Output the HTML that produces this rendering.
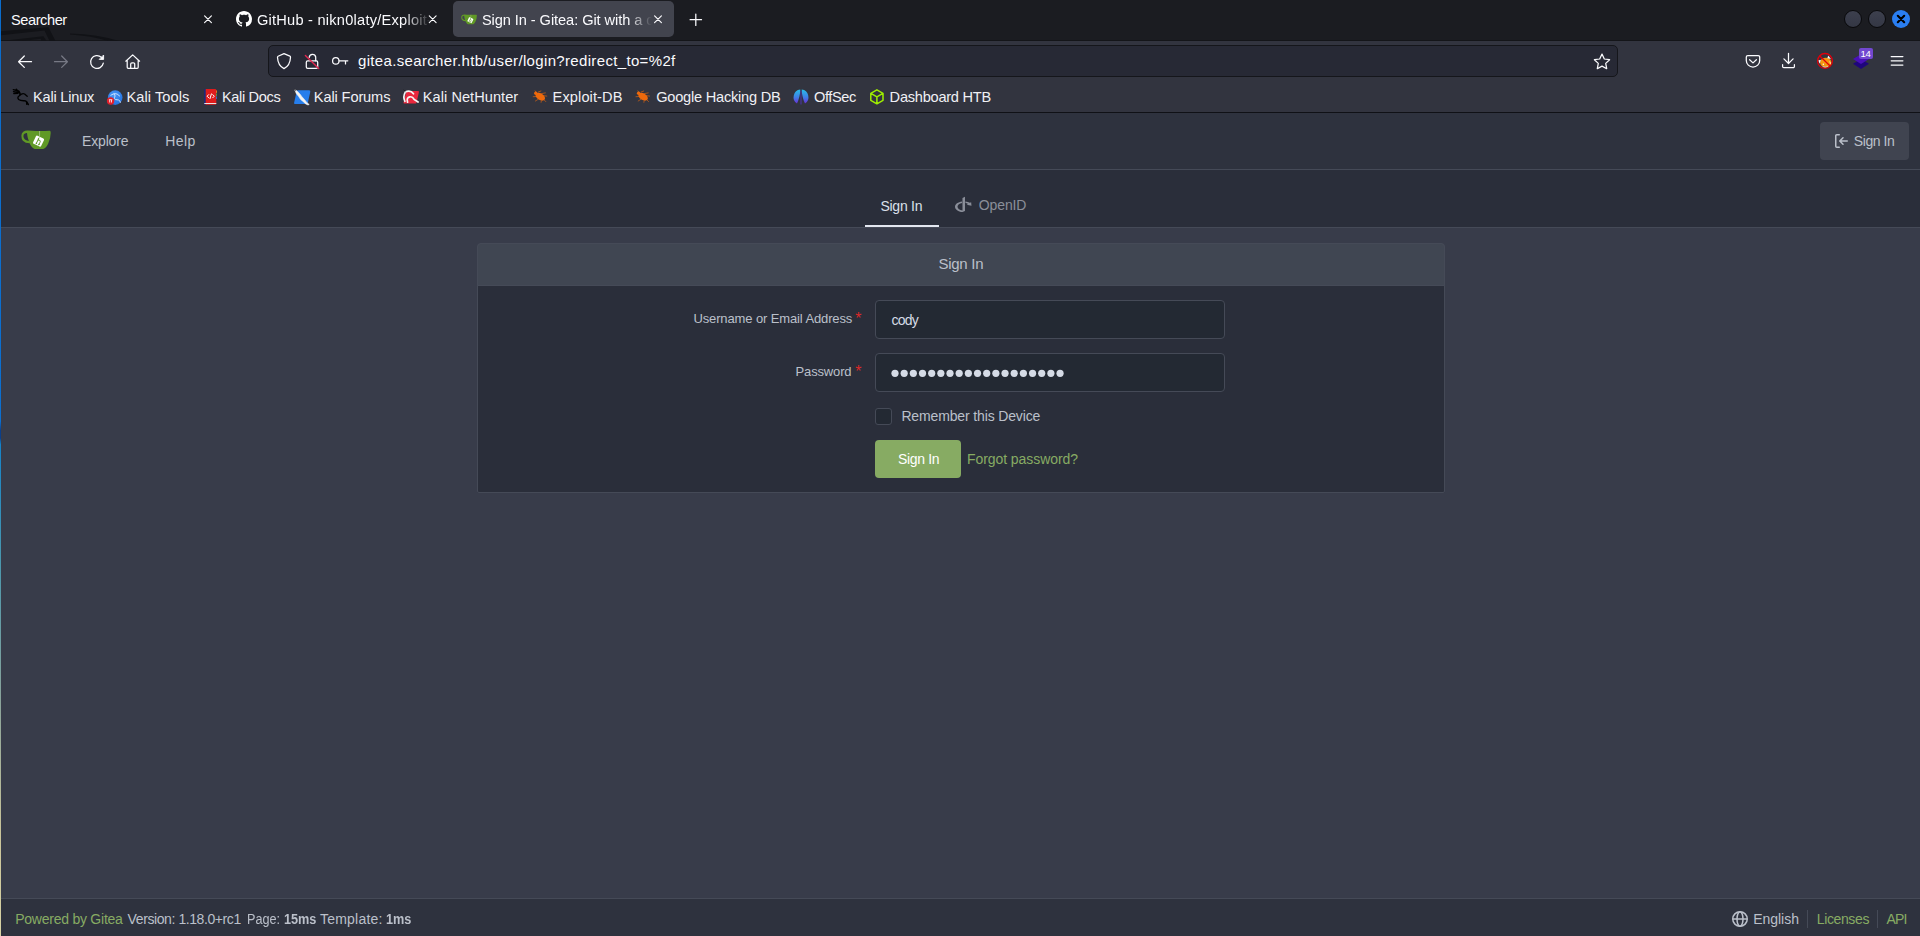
<!DOCTYPE html>
<html lang="en">
<head>
<meta charset="utf-8">
<title>Sign In - Gitea: Git with a cup of tea</title>
<style>
*{box-sizing:border-box;margin:0;padding:0}
html,body{width:1920px;height:936px;overflow:hidden;background:#383c4a}
body{position:relative;font-family:"Liberation Sans","DejaVu Sans",sans-serif;font-size:14px;color:#bbc0ca;-webkit-font-smoothing:antialiased}
.abs{position:absolute}
.t{position:absolute;white-space:nowrap;line-height:20px;height:20px}
svg{position:absolute;overflow:visible}
/* ---------- browser chrome ---------- */
#tabbar{left:0;top:0;width:1920px;height:41px;background:#1b1c21}
#toolbar{left:0;top:41px;width:1920px;height:71px;background:#32343f}
#chromeline{left:0;top:112px;width:1920px;height:1px;background:#101116}
#acttab{left:453px;top:1px;width:221px;height:36px;background:#42444e;border-radius:5px}
#urlbar{left:268px;top:45px;width:1350px;height:32px;background:#272935;border:1px solid #15161b;border-radius:5px}
.ct{color:#fbfbfe;font-size:14.6px}
.bm{color:#f0f0f4;font-size:14.6px}
/* ---------- page ---------- */
#nav{left:0;top:113px;width:1920px;height:57px;background:#2e323e;border-bottom:1px solid #454a57}
#tabs{left:0;top:170px;width:1920px;height:58px;background:#2a2e3a;border-bottom:1px solid #454a57}
#box{left:477px;top:243px;width:968px;height:250px;background:#2a2e3a;border:1px solid #454a57;border-radius:4px 4px 2px 2px}
#boxhead{left:477px;top:243px;width:968px;height:43px;background:#404652;border:1px solid #454a57;border-radius:4px 4px 0 0}
.inp{position:absolute;left:875px;width:350px;height:39px;background:#232933;border:1px solid #454a57;border-radius:4px}
#foot{left:0;top:898px;width:1920px;height:38px;background:#2e323e;border-top:1px solid #454a57}
#edge{left:0;top:0;width:1px;height:936px;background:linear-gradient(#0a6ccc 0,#0c6fd0 45%,#0b3f8a 46%,#0b3f8a 46.800%,#1583c9 47.500%,#4a97ad 60%,#8aa39a 75%,#c9c49a 89%,#d8d3a4 100%)}
</style>
</head>
<body>
<!-- TABBAR -->
<div class="abs" id="tabbar"></div>
<div class="abs" id="toolbar"></div>
<div class="abs" id="chromeline"></div>
<div class="abs" style="left:0;top:40px;width:1920px;height:1px;background:#141519"></div>
<div class="abs" id="acttab"></div>
<div class="abs" id="urlbar"></div>
<!-- PAGE -->
<div class="abs" id="nav"></div>
<div class="abs" id="tabs"></div>
<div class="abs" id="box"></div>
<div class="abs" id="boxhead"></div>
<div class="abs" id="foot"></div>


<!-- PAGE SHAPES -->
<div class="abs" id="navbtn" style="left:1820px;top:122px;width:89px;height:38px;background:#404450;border-radius:4px"></div>
<div class="abs" id="tabline" style="left:865px;top:225px;width:74px;height:2px;background:#e3e7f0"></div>
<div class="inp" id="inp1" style="top:300px"></div>
<div class="inp" id="inp2" style="top:353px"></div>
<div class="abs" id="chk" style="left:875px;top:408px;width:17px;height:17px;background:#232933;border:1px solid #454a57;border-radius:3px"></div>
<div class="abs" id="btn" style="left:875px;top:440px;width:86px;height:38px;background:#87ab63;border-radius:4px"></div>
<svg id="dots" style="left:885px;top:365px" width="190" height="16" viewBox="885 365 190 16"><g fill="#d5dbe6"><circle cx="895.00" cy="373.3" r="3.6"/><circle cx="904.17" cy="373.3" r="3.6"/><circle cx="913.34" cy="373.3" r="3.6"/><circle cx="922.51" cy="373.3" r="3.6"/><circle cx="931.68" cy="373.3" r="3.6"/><circle cx="940.85" cy="373.3" r="3.6"/><circle cx="950.02" cy="373.3" r="3.6"/><circle cx="959.19" cy="373.3" r="3.6"/><circle cx="968.36" cy="373.3" r="3.6"/><circle cx="977.53" cy="373.3" r="3.6"/><circle cx="986.70" cy="373.3" r="3.6"/><circle cx="995.87" cy="373.3" r="3.6"/><circle cx="1005.04" cy="373.3" r="3.6"/><circle cx="1014.21" cy="373.3" r="3.6"/><circle cx="1023.38" cy="373.3" r="3.6"/><circle cx="1032.55" cy="373.3" r="3.6"/><circle cx="1041.72" cy="373.3" r="3.6"/><circle cx="1050.89" cy="373.3" r="3.6"/><circle cx="1060.06" cy="373.3" r="3.6"/></g></svg>
<div class="abs" style="left:1807px;top:910px;width:1px;height:18px;background:#454a57"></div>
<div class="abs" style="left:1877px;top:910px;width:1px;height:18px;background:#454a57"></div>
<!-- PAGE ICONS -->
<svg width="0" height="0" style="left:0;top:0"><defs>
<symbol id="gitea" viewBox="0 0 640 640">
<path fill="#609926" fill-rule="evenodd" d="M150 140 Q240 146 318 150 Q470 154 613 145 Q634 146 634 192 Q634 300 579 423 Q552 482 520 508 Q496 531 472 531 L292 531 Q258 527 214 468 Q196 442 184 413 Q92 412 40 358 Q8 318 8 252 Q8 190 48 164 Q88 136 150 140 Z M128 191 Q76 188 58 224 Q44 258 60 296 Q76 336 126 354 Q148 361 168 363 Q150 312 143 286 Q134 250 128 191 Z"/>
<path d="M396 150 V262" stroke="#a9c48e" stroke-width="17"/>
<rect x="279" y="272" width="190" height="190" rx="26" fill="#fff" transform="rotate(25.700 374 367)"/>
<g transform="rotate(25.700 374 367)" stroke="#609926" stroke-width="17" fill="none" stroke-linecap="round">
<path d="M352 300 V438"/><path d="M352 372 Q356 340 392 338 Q412 340 412 372 V436"/>
</g>
<g transform="rotate(25.700 374 367)" fill="#609926"><circle cx="352" cy="326" r="15"/><circle cx="352" cy="424" r="15"/><circle cx="412" cy="424" r="15"/></g>
</symbol>
</defs></svg>
<svg style="left:21px;top:124px" width="30" height="30"><use href="#gitea"/></svg>
<svg style="left:461px;top:10.500px" width="16" height="16"><use href="#gitea"/></svg>
<svg style="left:954.750px;top:195.200px" width="16.500" height="18.860" viewBox="0 0 448 512"><path fill="#8a8e99" d="M271.500 432l-68 32C88.500 453.700 0 392.500 0 318.200c0-71.500 82.500-131 191.700-144.300v43c-71.500 12.500-124 53-124 101.300 0 51 58.500 93.300 135.700 103v-340l68-33.200v384.200zM448 291l-131.300-28.500 36.800-20.700c-19.500-11.500-43.500-20-70-24.800v-43c46.200 5.500 87.700 19.500 120.300 39.300l35-19.800L448 291z"/></svg>
<svg style="left:1833px;top:133px" width="16" height="16" viewBox="0 0 16 16"><path fill="#bbc0ca" fill-rule="evenodd" d="M2 2.750C2 1.784 2.784 1 3.750 1h2.500a.750.750 0 010 1.500h-2.500a.250.250 0 00-.250.250v10.500c0 .138.112.250.250.250h2.500a.750.750 0 010 1.500h-2.500A1.750 1.750 0 012 13.250V2.750zm6.560 4.500l1.970-1.970a.750.750 0 10-1.060-1.060L6.220 7.470a.750.750 0 000 1.060l3.250 3.250a.750.750 0 101.060-1.060L8.560 8.750h5.690a.750.750 0 000-1.500H8.560z"/></svg>
<svg style="left:1732px;top:911px" width="16" height="16" viewBox="0 0 16 16" fill="none" stroke="#bbc0ca" stroke-width="1.500"><circle cx="8" cy="8" r="7.250"/><ellipse cx="8" cy="8" rx="3" ry="7.250"/><path d="M.750 8h14.500"/></svg>
<!-- CHROME ICONS -->
<svg id="chromesvg" style="left:0;top:0" width="1920" height="113" viewBox="0 0 1920 113" fill="none">
<defs>
<linearGradient id="offg" x1="0" y1="0" x2="0" y2="1"><stop offset="0" stop-color="#27bde8"/><stop offset="0.55" stop-color="#3f7fe6"/><stop offset="1" stop-color="#6a2fd8"/></linearGradient>
<radialGradient id="ktg" cx="0.4" cy="0.3" r="0.8"><stop offset="0" stop-color="#4a97f5"/><stop offset="1" stop-color="#1f6fe0"/></radialGradient>
<linearGradient id="wcg" x1="0" y1="0" x2="0" y2="1"><stop offset="0" stop-color="#3d404e"/><stop offset="1" stop-color="#343744"/></linearGradient>
</defs>
<!-- kali dragon faint bg in tabbar -->
<g fill="#111216"><path d="M1 31.200L48.500 27.200 55.500 41H49.500L44.500 30.600 1 35.200z"/><path d="M1 41L43.500 36.300 46.500 41H41.500L40.800 38.800 22 41z"/><path d="M70 33.600Q98 34.500 119 41H108Q92 36 70 34.600z"/></g>
<!-- tab close buttons -->
<g stroke="#fbfbfe" stroke-width="1.15" stroke-linecap="round">
<path d="M204.6 15.9l6.8 6.8M211.4 15.9l-6.8 6.8"/>
<path d="M429.3 15.9l6.8 6.8M436.1 15.9l-6.8 6.8"/>
<path d="M654.6 15.9l6.8 6.8M661.4 15.9l-6.8 6.8"/>
<path d="M695.8 14v11.400M690.100 19.700h11.400" stroke-width="1.250"/>
</g>
<!-- github favicon -->
<g transform="translate(236 11)"><path fill="#fff" d="M8 0C3.58 0 0 3.58 0 8c0 3.54 2.29 6.53 5.47 7.59.4.07.55-.17.55-.38 0-.19-.01-.82-.01-1.49-2.01.37-2.53-.49-2.69-.94-.09-.23-.48-.94-.82-1.13-.28-.15-.68-.52-.01-.53.63-.01 1.08.58 1.23.82.72 1.21 1.87.87 2.33.66.07-.52.28-.87.51-1.07-1.78-.2-3.64-.89-3.64-3.95 0-.87.31-1.59.82-2.15-.08-.2-.36-1.02.08-2.12 0 0 .67-.21 2.2.82.64-.18 1.32-.27 2-.27.68 0 1.36.09 2 .27 1.53-1.04 2.2-.82 2.2-.82.44 1.1.16 1.92.08 2.12.51.56.82 1.27.82 2.15 0 3.07-1.87 3.75-3.65 3.95.29.25.54.73.54 1.48 0 1.07-.01 1.93-.01 2.2 0 .21.15.46.55.38A8.013 8.013 0 0016 8c0-4.42-3.58-8-8-8z"/></g>
<!-- window controls -->
<circle cx="1853" cy="19" r="8.5" fill="url(#wcg)" stroke="#08080a" stroke-width="1"/>
<circle cx="1877" cy="19" r="8.5" fill="url(#wcg)" stroke="#08080a" stroke-width="1"/>
<circle cx="1901" cy="19" r="9" fill="#2a7ef2"/>
<path d="M1897.8 15.8l6.4 6.4M1904.2 15.8l-6.4 6.4" stroke="#000" stroke-width="2.1" stroke-linecap="round"/>
<!-- nav icons -->
<g stroke="#fbfbfe" stroke-width="1.25" stroke-linecap="round" stroke-linejoin="round">
<path d="M31.5 61.7H18.6M24.3 56l-5.7 5.7 5.7 5.7"/>
<path d="M54.5 61.7h12.9M61.7 56l5.7 5.7-5.7 5.7" stroke="#777985"/>
<path d="M103.3 63.2a6.4 6.4 0 1 1-2-5.9"/>
<path d="M103.6 55.4v4h-4z" fill="#fbfbfe" stroke-width="0.9"/>
<path d="M125.8 61.2l6.9-6.3 6.9 6.3M127.2 60.4v6.9a1 1 0 0 0 1 1h9a1 1 0 0 0 1-1v-6.9M130.7 68.1v-4a1.3 1.3 0 0 1 1.3-1.3h1.4a1.3 1.3 0 0 1 1.3 1.3v4"/>
<!-- shield -->
<path d="M284 53.7l5.9 2.5a1 1 0 0 1 .6 1c-.2 5.300-2.600 9.400-6.500 11.400-3.900-2-6.300-6.100-6.500-11.400a1 1 0 0 1 .6-1z"/>
<!-- lock -->
<path d="M308.300 60.9h8a1.400 1.400 0 0 1 1.400 1.400v4.700a1.400 1.400 0 0 1-1.400 1.400h-8.600a1.400 1.400 0 0 1-1.400-1.400v-4.700a1.400 1.400 0 0 1 1.400-1.400z"/>
<path d="M309.200 57.300a3.300 3.300 0 0 1 6.500-.300v3.800"/>
<path d="M305.400 55.400l13.300 13.100" stroke="#e22850" stroke-width="1.4"/>
<!-- key -->
<circle cx="335.800" cy="60.900" r="3.200"/>
<path d="M339.100 60.800h8.700M345.500 60.900v3"/>
<!-- star -->
<path d="M1602 54.100l2.300 4.900 5.300.700-3.900 3.700 1 5.300-4.700-2.600-4.700 2.600 1-5.300-3.900-3.700 5.300-.700z"/>
<!-- pocket -->
<path d="M1747.800 55.500h10.400a1.500 1.500 0 0 1 1.500 1.500v3.400a6.700 6.700 0 0 1-13.400 0v-3.400a1.500 1.500 0 0 1 1.500-1.500z"/>
<path d="M1749.600 59.700l3.400 3.200 3.400-3.200"/>
<!-- download -->
<path d="M1788.500 53.300v10M1783.900 58.900l4.600 4.600 4.600-4.600M1782.600 64.700v1.700a1.200 1.200 0 0 0 1.200 1.200h9.400a1.200 1.200 0 0 0 1.200-1.200v-1.700"/>
<!-- hamburger -->
<path d="M1891.200 56.500h11.700M1891.200 60.800h11.700M1891.200 65.100h11.700"/>
</g>
<!-- foxyproxy -->
<g>
<ellipse cx="1825.800" cy="62.600" rx="5.700" ry="4.900" fill="#f5960f"/>
<path d="M1828.200 55.500l2.700 3.400-3.500-.600z" fill="#fff"/>
<path d="M1818.200 60.200l2.700-.300-1.200 3.800z" fill="#fff"/>
<path d="M1829.400 60.500l1.600 2.800-1 .8z" fill="#fff" opacity=".85"/>
<path d="M1822.300 67.100q3 1.300 6 0l-.500-.800q-2.500.800-5 0z" fill="#c7d9dc"/>
<circle cx="1823.300" cy="64.300" r=".7" fill="#fff"/>
<circle cx="1825" cy="60.900" r="7.400" stroke="#e0000c" stroke-width="1.300"/>
<path d="M1819.500 55.800l10.900 10.400" stroke="#e0000c" stroke-width="1.300"/>
</g>
<!-- purple layers ext -->
<path d="M1861 58.900l8 4.900-8 5.200-8-5.200z" fill="#1f067c"/>
<path d="M1861 54.300l8 4.800-8 4.900-8-4.900z" fill="#4a10b8"/>
<rect x="1859" y="48.100" width="14" height="10.800" rx="2" fill="#7248d0"/>
<!-- bookmark favicons -->
<!-- kali linux dragon -->
<g stroke="#000" stroke-width="1.350" stroke-linecap="round" stroke-linejoin="round">
<path d="M13.300 89.700l5.200 1.300M13.500 91.600l4.800 .800M13.800 93.500l4.200-.100M16.300 89.300l3.400 3.600"/>
<path d="M19 91.300q2 3 .3 4.400-2.500 1.800-.6 3.700 1.700 1.400 5.300 1.300 3.100.300 3.700 2.700l.7 1.200M26.500 101.800l.3 2.500M19.600 95.400q2.700-2.600 5-1.400l2.600 2.300"/>
</g>
<!-- kali tools -->
<circle cx="115.200" cy="97.600" r="7.300" fill="url(#ktg)"/>
<path d="M110.800 95.200q3.700-2.700 6.300-1.200l2.500 2M114.300 94.200q1.500 2 .3 3.100-1 1.300.8 2.200l3.100.5q1.700.4 1.900 2.300" stroke="#d8e8ff" stroke-width=".9" stroke-linecap="round"/>
<circle cx="110.600" cy="101" r="3.700" fill="#e2202c"/>
<path d="M108.900 99.700h3.400M109.700 99.900v2.600M111.500 99.900v2.600" stroke="#fff" stroke-width=".8"/>
<!-- kali docs -->
<rect x="204" y="89" width="12.300" height="15.800" rx="1.200" fill="#df1c1c"/>
<rect x="204" y="89" width="1.700" height="15.800" fill="#1b2a78"/>
<rect x="204.300" y="103" width="12" height="1" fill="#e8e3e3"/>
<rect x="216" y="90.500" width=".9" height="2.400" fill="#f2801c"/><rect x="216" y="93.500" width=".9" height="2.400" fill="#4fa64a"/><rect x="216" y="96.500" width=".9" height="2.400" fill="#3c6fd6"/>
<path d="M208.700 94.600l-1.600 1.600 1.600 1.600M212.700 94.600l1.600 1.600-1.600 1.600M211.400 93.900l-1.400 4.700" stroke="#fff" stroke-width="1" stroke-linecap="round" stroke-linejoin="round"/>
<!-- kali forums -->
<path d="M298 90.200h11.200a1.200 1.200 0 0 1 1.100 1.500l-2.500 11.400a1.300 1.300 0 0 1-1.300 1h-11.300a1.100 1.100 0 0 1-1.100-1.400l2.600-11.500a1.300 1.300 0 0 1 1.300-1z" fill="#267eec"/>
<path d="M294.600 89.600l2.400 1.300 2.700 2.800 2.400 3.200 2.300 2.500 2.600 3.400 2.200 1.600-1.200.6-2.300-1.100-2.700-2.500-2.300-1.800-2.200-3.300-2.100-2.600-1.100-2.500z" fill="#f4f4f2" stroke="#f4f4f2" stroke-width=".6"/>
<path d="M294.200 89.200l1.800 1.400" stroke="#111" stroke-width=".7"/>
<!-- kali nethunter -->
<path d="M407.600 91h10.500a.9.900 0 0 1 .8 1.200l-2.400 10.600a1 1 0 0 1-1 .8h-11.100a.9.900 0 0 1-.9-1.100l2.700-10.500a1.400 1.400 0 0 1 1.400-1z" fill="#e9283e"/>
<path d="M405.300 92.200q-2.600 4.800-.4 9.100M405.200 92q5.300-2.500 8.300 1.800M407.600 102.200q-1.400-4.600 2.200-5.400 2.800-.3 4.300 2.600l4 2.600" stroke="#f6f6f6" stroke-width="1.700" stroke-linecap="round"/>
<path d="M403.700 90l1.700 1.600" stroke="#111" stroke-width=".8"/>
<!-- exploit-db bugs -->
<g id="bug" fill="#ee690c" stroke="#ee690c" stroke-linecap="round">
<ellipse cx="540.300" cy="96.700" rx="5.200" ry="3.300" transform="rotate(32 540.300 96.700)" stroke="none"/>
<circle cx="535.800" cy="93.300" r="1.700" stroke="none"/>
<path d="M536 92.200l-.9-1.300M538.300 92l2.600-1M541.500 93.600l3.900-.7M543.800 95.700l3 .4M536 96.500l-2.800.2M538 99.400l-2.600 1.600M541.300 101l-.2 1.300M544.400 100.200l1.400 1.400" stroke-width=".6" fill="none"/>
</g>
<use href="#bug" x="102.800" y="0"/>
<!-- offsec -->
<path d="M800.300 89.600a7.600 7.600 0 0 0-3.300 13.900c2-4 3.200-8.800 3.300-13.900zM801.700 89.600a7.600 7.600 0 0 1 3.300 13.900c-2-4-3.200-8.800-3.300-13.900z" fill="url(#offg)"/>
<path d="M801 90.500v14" stroke="#5a37d8" stroke-width=".7"/>
<!-- htb cube -->
<path d="M876.900 89.800l6.100 3.500v7l-6.100 3.500-6.100-3.500v-7zM870.900 93.400l6 3.400 6-3.400M876.900 96.800v6.900" stroke="#9fef00" stroke-width="1.500" stroke-linejoin="round"/>
</svg>
<div class="t" id="t_badge" style="left:1860.400px;top:43.700px;font-size:9.600px;color:#fff;letter-spacing:-0.200px">14</div>
<!-- CHROME TEXT -->
<div class="t ct" id="t_tab1" style="left:11.0px;letter-spacing:-0.43px;top:10px">Searcher</div>
<div class="t ct" id="t_tab2" style="left:256.9px;letter-spacing:0.242px;top:10px;width:176px;overflow:hidden;-webkit-mask-image:linear-gradient(90deg,#000 0,#000 147px,transparent 174px);mask-image:linear-gradient(90deg,#000 0,#000 147px,transparent 174px)">GitHub - nikn0laty/Exploit-DB</div>
<div class="t ct" id="t_tab3" style="left:481.9px;letter-spacing:-0.067px;top:10px;width:176px;overflow:hidden;-webkit-mask-image:linear-gradient(90deg,#000 0,#000 146px,transparent 170px);mask-image:linear-gradient(90deg,#000 0,#000 146px,transparent 170px)">Sign In - Gitea: Git with a cup of tea</div>
<div class="t ct" id="t_url" style="left:358.0px;letter-spacing:0.34px;top:51px;font-size:15px">gitea.searcher.htb/user/login?redirect_to=%2f</div>
<div class="t bm" id="t_bm1" style="left:33px;letter-spacing:-0.21px;top:87px">Kali Linux</div>
<div class="t bm" id="t_bm2" style="left:126.4px;letter-spacing:0.08px;top:87px">Kali Tools</div>
<div class="t bm" id="t_bm3" style="left:222.0px;letter-spacing:-0.37px;top:87px">Kali Docs</div>
<div class="t bm" id="t_bm4" style="left:313.8px;letter-spacing:-0.12px;top:87px">Kali Forums</div>
<div class="t bm" id="t_bm5" style="left:422.8px;letter-spacing:0.04px;top:87px">Kali NetHunter</div>
<div class="t bm" id="t_bm6" style="left:552.6px;letter-spacing:0.1px;top:87px">Exploit-DB</div>
<div class="t bm" id="t_bm7" style="left:656.2px;letter-spacing:-0.23px;top:87px">Google Hacking DB</div>
<div class="t bm" id="t_bm8" style="left:814.0px;letter-spacing:-0.4px;top:87px">OffSec</div>
<div class="t bm" id="t_bm9" style="left:889.6px;letter-spacing:-0.25px;top:87px">Dashboard HTB</div>
<!-- PAGE TEXT -->
<div class="t" id="t_explore" style="left:82.0px;letter-spacing:-0.16px;top:131px">Explore</div>
<div class="t" id="t_help" style="left:165.2px;letter-spacing:0.4px;top:131px">Help</div>
<div class="t" id="t_signin_r" style="left:1853.8px;letter-spacing:-0.43px;top:131px">Sign In</div>
<div class="t" id="t_tab_signin" style="left:880.4px;letter-spacing:-0.24px;top:196px;color:#dbe0ea">Sign In</div>
<div class="t" id="t_tab_openid" style="left:978.8px;letter-spacing:-0.12px;top:195px;color:#8a8e99">OpenID</div>
<div class="t" id="t_head" style="left:938.4px;letter-spacing:-0.27px;top:254px;font-size:15px">Sign In</div>
<div class="t" id="t_lbl_user" style="left:693.4px;letter-spacing:-0.12px;top:309px;font-size:13px">Username or Email Address</div>
<div class="t" id="t_ast1" style="left:855.2px;top:308.6px;font-size:16px;color:#db2828">*</div>
<div class="t" id="t_lbl_pass" style="left:795.6px;letter-spacing:-0.16px;top:362px;font-size:13px">Password</div>
<div class="t" id="t_ast2" style="left:855.2px;top:361.6px;font-size:16px;color:#db2828">*</div>
<div class="t" id="t_cody" style="left:891.6px;letter-spacing:-0.8px;top:310px;color:#d5dbe6">cody</div>
<div class="t" id="t_remember" style="left:901.4px;letter-spacing:-0.14px;top:406px">Remember this Device</div>
<div class="t" id="t_btn" style="left:898.0px;letter-spacing:-0.33px;top:449px;color:#fff">Sign In</div>
<div class="t" id="t_forgot" style="left:967.0px;letter-spacing:-0.07px;top:449px;color:#87ab63">Forgot password?</div>
<div class="t" id="t_powered" style="left:15.2px;letter-spacing:-0.24px;top:909px;color:#87ab63">Powered by Gitea</div>
<div class="t" id="t_ver1" style="left:127.6px;letter-spacing:-0.41px;top:909px">Version: 1.18.0+rc1</div>
<div class="t" id="t_ver2" style="left:246.9px;transform-origin:0 0;transform:scaleX(0.903);top:909px">Page:</div>
<div class="t" id="t_ver3" style="left:283.8px;transform-origin:0 0;transform:scaleX(0.905);top:909px;font-weight:bold">15ms</div>
<div class="t" id="t_ver4" style="left:320.0px;letter-spacing:0.21px;top:909px">Template:</div>
<div class="t" id="t_ver5" style="left:385.9px;transform-origin:0 0;transform:scaleX(0.904);top:909px;font-weight:bold">1ms</div>
<div class="t" id="t_english" style="left:1753.2px;letter-spacing:-0.03px;top:909px">English</div>
<div class="t" id="t_licenses" style="left:1816.8px;letter-spacing:-0.38px;top:909px;color:#87ab63">Licenses</div>
<div class="t" id="t_api" style="left:1886.4px;letter-spacing:-0.8px;top:909px;color:#87ab63">API</div>
<div class="abs" id="edge"></div>
</body>
</html>
